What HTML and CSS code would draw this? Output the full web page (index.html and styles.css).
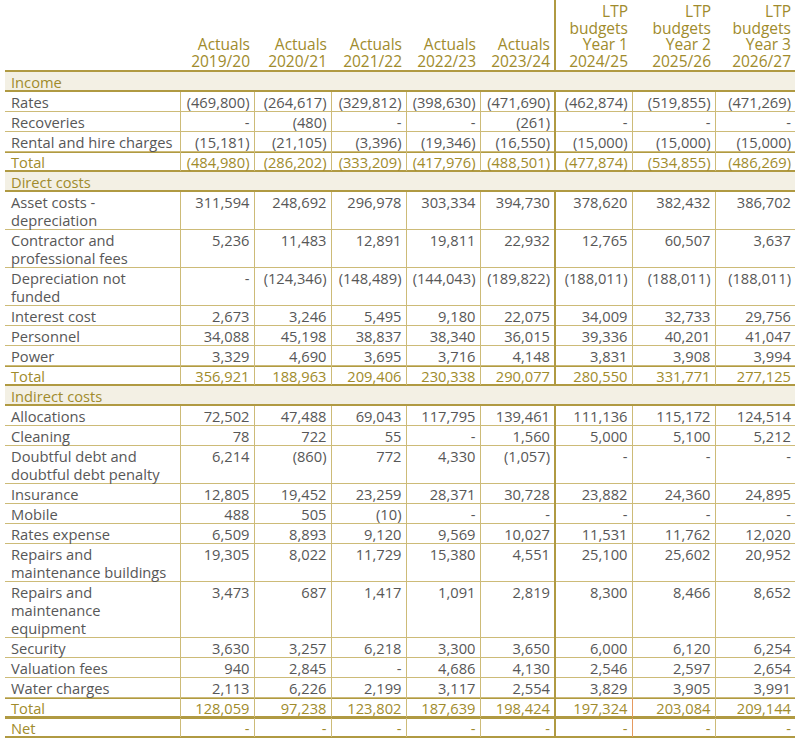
FILE: index.html
```html
<!DOCTYPE html>
<html>
<head>
<meta charset="utf-8">
<link rel="stylesheet" href="styles.css">
</head>
<body>
<table class="fin">
<colgroup>
<col class="c-label"><col class="c1"><col class="c2"><col class="c3"><col class="c4"><col class="c5"><col class="c6"><col class="c7"><col class="c8">
</colgroup>
<thead>
<tr>
<th></th>
<th>Actuals<br>2019/20</th>
<th>Actuals<br>2020/21</th>
<th>Actuals<br>2021/22</th>
<th>Actuals<br>2022/23</th>
<th class="split">Actuals<br>2023/24</th>
<th>LTP<br>budgets<br>Year 1<br>2024/25</th>
<th>LTP<br>budgets<br>Year 2<br>2025/26</th>
<th>LTP<br>budgets<br>Year 3<br>2026/27</th>
</tr>
</thead>
<tbody>
<tr class="section"><td colspan="9">Income</td></tr>
<tr><td>Rates</td><td>(469,800)</td><td>(264,617)</td><td>(329,812)</td><td>(398,630)</td><td class="split">(471,690)</td><td>(462,874)</td><td>(519,855)</td><td>(471,269)</td></tr>
<tr><td>Recoveries</td><td>-</td><td>(480)</td><td>-</td><td>-</td><td class="split">(261)</td><td>-</td><td>-</td><td>-</td></tr>
<tr><td>Rental and hire charges</td><td>(15,181)</td><td>(21,105)</td><td>(3,396)</td><td>(19,346)</td><td class="split">(16,550)</td><td>(15,000)</td><td>(15,000)</td><td>(15,000)</td></tr>
<tr class="total"><td>Total</td><td>(484,980)</td><td>(286,202)</td><td>(333,209)</td><td>(417,976)</td><td class="split">(488,501)</td><td>(477,874)</td><td>(534,855)</td><td>(486,269)</td></tr>
<tr class="section"><td colspan="9">Direct costs</td></tr>
<tr><td>Asset costs -<br>depreciation</td><td>311,594</td><td>248,692</td><td>296,978</td><td>303,334</td><td class="split">394,730</td><td>378,620</td><td>382,432</td><td>386,702</td></tr>
<tr><td>Contractor and<br>professional fees</td><td>5,236</td><td>11,483</td><td>12,891</td><td>19,811</td><td class="split">22,932</td><td>12,765</td><td>60,507</td><td>3,637</td></tr>
<tr><td>Depreciation not<br>funded</td><td>-</td><td>(124,346)</td><td>(148,489)</td><td>(144,043)</td><td class="split">(189,822)</td><td>(188,011)</td><td>(188,011)</td><td>(188,011)</td></tr>
<tr><td>Interest cost</td><td>2,673</td><td>3,246</td><td>5,495</td><td>9,180</td><td class="split">22,075</td><td>34,009</td><td>32,733</td><td>29,756</td></tr>
<tr><td>Personnel</td><td>34,088</td><td>45,198</td><td>38,837</td><td>38,340</td><td class="split">36,015</td><td>39,336</td><td>40,201</td><td>41,047</td></tr>
<tr><td>Power</td><td>3,329</td><td>4,690</td><td>3,695</td><td>3,716</td><td class="split">4,148</td><td>3,831</td><td>3,908</td><td>3,994</td></tr>
<tr class="total"><td>Total</td><td>356,921</td><td>188,963</td><td>209,406</td><td>230,338</td><td class="split">290,077</td><td>280,550</td><td>331,771</td><td>277,125</td></tr>
<tr class="section"><td colspan="9">Indirect costs</td></tr>
<tr><td>Allocations</td><td>72,502</td><td>47,488</td><td>69,043</td><td>117,795</td><td class="split">139,461</td><td>111,136</td><td>115,172</td><td>124,514</td></tr>
<tr><td>Cleaning</td><td>78</td><td>722</td><td>55</td><td>-</td><td class="split">1,560</td><td>5,000</td><td>5,100</td><td>5,212</td></tr>
<tr><td>Doubtful debt and<br>doubtful debt penalty</td><td>6,214</td><td>(860)</td><td>772</td><td>4,330</td><td class="split">(1,057)</td><td>-</td><td>-</td><td>-</td></tr>
<tr><td>Insurance</td><td>12,805</td><td>19,452</td><td>23,259</td><td>28,371</td><td class="split">30,728</td><td>23,882</td><td>24,360</td><td>24,895</td></tr>
<tr><td>Mobile</td><td>488</td><td>505</td><td>(10)</td><td>-</td><td class="split">-</td><td>-</td><td>-</td><td>-</td></tr>
<tr><td>Rates expense</td><td>6,509</td><td>8,893</td><td>9,120</td><td>9,569</td><td class="split">10,027</td><td>11,531</td><td>11,762</td><td>12,020</td></tr>
<tr><td>Repairs and<br>maintenance buildings</td><td>19,305</td><td>8,022</td><td>11,729</td><td>15,380</td><td class="split">4,551</td><td>25,100</td><td>25,602</td><td>20,952</td></tr>
<tr><td>Repairs and<br>maintenance<br>equipment</td><td>3,473</td><td>687</td><td>1,417</td><td>1,091</td><td class="split">2,819</td><td>8,300</td><td>8,466</td><td>8,652</td></tr>
<tr><td>Security</td><td>3,630</td><td>3,257</td><td>6,218</td><td>3,300</td><td class="split">3,650</td><td>6,000</td><td>6,120</td><td>6,254</td></tr>
<tr><td>Valuation fees</td><td>940</td><td>2,845</td><td>-</td><td>4,686</td><td class="split">4,130</td><td>2,546</td><td>2,597</td><td>2,654</td></tr>
<tr><td>Water charges</td><td>2,113</td><td>6,226</td><td>2,199</td><td>3,117</td><td class="split">2,554</td><td>3,829</td><td>3,905</td><td>3,991</td></tr>
<tr class="total"><td>Total</td><td>128,059</td><td>97,238</td><td>123,802</td><td>187,639</td><td class="split">198,424</td><td class="accent">197,324</td><td>203,084</td><td>209,144</td></tr>
<tr class="total"><td>Net</td><td>-</td><td>-</td><td>-</td><td>-</td><td class="split">-</td><td class="accent">-</td><td>-</td><td>-</td></tr>
</tbody>
</table>
</body>
</html>
```

FILE: styles.css
```css
html, body {
  margin: 0;
  padding: 0;
  background: #ffffff;
}
body {
  font-family: "Open Sans", "Noto Sans", sans-serif;
  font-size: 14.7px;
  color: #575757;
}
.fin {
  margin: 0 0 0 5px;
  border-collapse: collapse;
  table-layout: fixed;
  width: 790px;
}
.c-label { width: 175px; }
.c1 { width: 74px; }
.c2 { width: 77px; }
.c3 { width: 75px; }
.c4 { width: 74px; }
.c5 { width: 75px; }
.c6 { width: 77px; }
.c7 { width: 83px; }
.c8 { width: 80px; }

.fin th {
  height: 69px;
  padding: 0 4px 2px 0;
  font-size: 15.5px;
  font-weight: normal;
  color: #a08b2c;
  text-align: right;
  vertical-align: bottom;
  line-height: 16.5px;
  border-bottom: 1px solid #b09a42;
  box-shadow: inset 0 -1px 0 #b09a42;
}
.fin th.split {
  border-right: 2px solid #b09a42;
}
.fin td {
  padding: 1px 4px 0 4px;
  line-height: 18px;
  text-align: right;
  vertical-align: top;
  white-space: nowrap;
  border: 1px solid #cdbb78;
}
.fin td:first-child {
  text-align: left;
  padding-left: 6px;
  border-left: none;
}
.fin td:last-child {
  border-right: none;
}
.fin td.split {
  border-right: 2px solid #b09a42;
}
.fin tr.section td {
  background: #f3f0e4;
  color: #a08b2c;
  text-align: left;
  border-left: none;
  border-right: none;
  border-bottom-color: #b09a42;
  box-shadow: inset 0 -1px 0 #b09a42;
}
.fin tr.total td {
  color: #a08b2c;
  border-top-color: #b09a42;
  border-bottom-color: #b09a42;
  box-shadow: inset 0 1px 0 #b09a42, inset 0 -1px 0 #b09a42;
}
.fin tr.total td.accent {
  border-right-color: #e59a5e;
}
```
